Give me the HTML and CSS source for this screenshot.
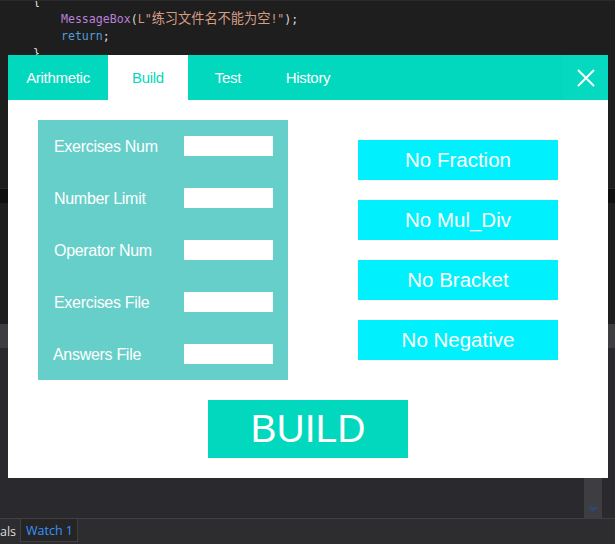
FILE: index.html
```html
<!DOCTYPE html>
<html>
<head>
<meta charset="utf-8">
<link rel="stylesheet" href="styles.css">
</head>
<body>
<div class="ide">
  <div class="editor">
    <pre class="code"><span class="p">{</span>
    <span class="fn">MessageBox</span><span class="p">(</span><span class="str">L"<span class="cjk">练习文件名不能为空</span>!"</span><span class="p">);</span>
    <span class="kw">return</span><span class="p">;</span>
<span class="p">}</span></pre>
  </div>
  <div class="band-black"></div>
  <div class="editor2"></div>
  <div class="band-grey"></div>
  <div class="panel-area">
    <div class="scroll"><span class="arrow"></span></div>
  </div>
  <div class="tabstrip">
    <span class="tab-plain">als</span>
    <span class="tab-watch">Watch 1</span>
  </div>
</div>

<div class="window">
  <div class="header">
    <div class="tab">Arithmetic</div>
    <div class="tab active narrow">Build</div>
    <div class="tab narrow">Test</div>
    <div class="tab narrow">History</div>
    <div class="spacer"></div>
    <div class="close">
      <svg width="18" height="18" viewBox="0 0 18 18"><path d="M1 1 L17 17 M17 1 L1 17" stroke="#fff" stroke-width="2" fill="none"/></svg>
    </div>
  </div>
  <div class="content">
    <div class="top">
      <div class="form">
        <div class="row"><span class="lbl">Exercises Num</span><span class="inp"></span></div>
        <div class="row"><span class="lbl">Number Limit</span><span class="inp"></span></div>
        <div class="row"><span class="lbl">Operator Num</span><span class="inp"></span></div>
        <div class="row"><span class="lbl">Exercises File</span><span class="inp"></span></div>
        <div class="row"><span class="lbl shift">Answers File</span><span class="inp"></span></div>
      </div>
      <div class="opts">
        <div class="opt">No Fraction</div>
        <div class="opt">No Mul_Div</div>
        <div class="opt">No Bracket</div>
        <div class="opt">No Negative</div>
      </div>
    </div>
    <div class="build">BUILD</div>
  </div>
</div>
</body>
</html>
```

FILE: styles.css
```css
html, body {
  margin: 0;
  padding: 0;
}
body {
  width: 615px;
  height: 544px;
  overflow: hidden;
  position: relative;
  background: #1e1e1e;
  font-family: "Liberation Sans", Arial, sans-serif;
}
.ide {
  display: flex;
  flex-direction: column;
  height: 544px;
}
.editor {
  height: 188px;
  background: #1e1e1e;
  border-top: 1px solid #2a2a2c;
  box-sizing: border-box;
  overflow: hidden;
}
.code {
  margin: -9px 0 0 0;
  padding-left: 33px;
  font-family: "DejaVu Sans Mono", "Noto Sans CJK SC", monospace;
  font-size: 11.6px;
  line-height: 17px;
  color: #dcdcdc;
}
.code .fn { color: #b980d8; }
.code .str { color: #d69d85; }
.code .cjk { font-family: "Noto Sans CJK SC", sans-serif; font-size: 13.2px; }
.code .kw { color: #569cd6; }
.code .p { color: #dcdcdc; }
.band-black {
  height: 14px;
  background: #0f0f0f;
  border-top: 1px solid #2a2a2a;
}
.editor2 {
  height: 121px;
  background: #1e1e1e;
}
.band-grey {
  height: 24px;
  background: #3e3e42;
}
.panel-area {
  flex: 1;
  background: #2a2a2e;
  display: flex;
  justify-content: flex-end;
  padding-right: 13px;
}
.scroll {
  width: 18px;
  background: #3e3e42;
  display: flex;
  align-items: flex-end;
  justify-content: center;
  padding-bottom: 6px;
}
.arrow {
  width: 0;
  height: 0;
  border-left: 5px solid transparent;
  border-right: 5px solid transparent;
  border-top: 5px solid #2b4a6e;
}
.tabstrip {
  height: 26px;
  background: #2d2d30;
  border-top: 1px solid #3f3f46;
  box-sizing: border-box;
  display: flex;
  align-items: flex-start;
  font-family: "Open Sans", sans-serif;
  font-size: 12.5px;
}
.tab-plain {
  color: #dcdcdc;
  width: 20px;
  box-sizing: border-box;
  padding-top: 4px;
  text-align: right;
  padding-right: 6px;
}
.tab-watch {
  color: #3794ff;
  background: #252526;
  border-right: 1px solid #3f3f46;
  border-bottom: 1px solid #3f3f46;
  border-left: 1px solid #3f3f46;
  height: 23px;
  width: 58px;
  box-sizing: border-box;
  padding: 3px 0 0 5px;
}

.window {
  position: absolute;
  left: 8px;
  top: 55px;
  width: 600px;
  height: 423px;
  background: #fff;
  display: flex;
  flex-direction: column;
}
.header {
  height: 45px;
  background: #02d8bd;
  display: flex;
  align-items: stretch;
}
.tab {
  width: 100px;
  display: flex;
  align-items: center;
  justify-content: center;
  color: #fff;
  font-size: 15px;
  letter-spacing: -0.3px;
}
.tab.narrow { width: 80px; }
.tab.active {
  background: #fff;
  color: #02d8bd;
}
.spacer { flex: 1; }
.close {
  width: 45px;
  background: #05d9bf;
  display: flex;
  align-items: center;
  justify-content: center;
}
.content {
  flex: 1;
  padding: 20px 0 20px 30px;
  display: flex;
  flex-direction: column;
}
.top {
  display: flex;
  align-items: flex-start;
  gap: 70px;
}
.form {
  width: 250px;
  height: 260px;
  box-sizing: border-box;
  background: #66cfca;
  padding: 16px 15px 16px 16px;
  display: flex;
  flex-direction: column;
  gap: 32px;
}
.row {
  height: 20px;
  display: flex;
  align-items: center;
  justify-content: space-between;
}
.lbl {
  color: #fff;
  font-size: 16px;
  letter-spacing: -0.3px;
  padding-top: 2px;
}
.lbl.shift { margin-left: -1px; }
.inp {
  width: 89px;
  height: 20px;
  background: #fff;
}
.opts {
  padding-top: 20px;
  display: flex;
  flex-direction: column;
  gap: 20px;
}
.opt {
  width: 200px;
  height: 40px;
  background: #00f1fd;
  color: #fff;
  font-size: 20.5px;
  display: flex;
  align-items: center;
  justify-content: center;
}
.build {
  margin: 20px 0 0 170px;
  width: 200px;
  height: 58px;
  background: #02d8bd;
  color: #fff;
  font-size: 39px;
  display: flex;
  align-items: center;
  justify-content: center;
}
```
